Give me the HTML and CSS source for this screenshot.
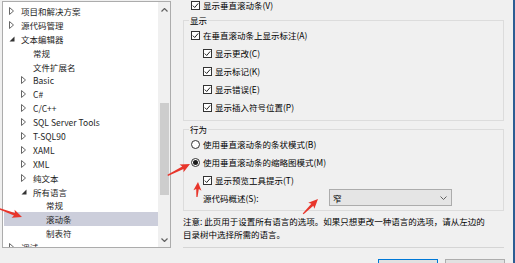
FILE: index.html
```html
<!DOCTYPE html>
<html lang="zh-CN">
<head>
    <meta charset="UTF-8">
    <meta name="viewport" content="width=device-width, initial-scale=1.0">
    <title>选项 - 滚动条</title>
    <link rel="stylesheet" href="styles.css">
</head>
<body>
    <div class="window">
        <div class="tree">
            <ul class="tree-list">
                <li class="node lv0"><span class="tw"><svg width="5" height="8" viewBox="0 0 5 8"><path d="M0.5 0.5 L4.5 4 L0.5 7.5 Z" fill="none" stroke="#666"/></svg></span>项目和解决方案</li>
                <li class="node lv0"><span class="tw"><svg width="5" height="8" viewBox="0 0 5 8"><path d="M0.5 0.5 L4.5 4 L0.5 7.5 Z" fill="none" stroke="#666"/></svg></span>源代码管理</li>
                <li class="node lv0"><span class="tw"><svg width="6" height="6" viewBox="0 0 6 6"><path d="M5.5 0.5 V5.5 H0.5 Z" fill="#333"/></svg></span>文本编辑器</li>
                <li class="node lv1"><span class="tw"></span>常规</li>
                <li class="node lv1"><span class="tw"></span>文件扩展名</li>
                <li class="node lv1"><span class="tw"><svg width="5" height="8" viewBox="0 0 5 8"><path d="M0.5 0.5 L4.5 4 L0.5 7.5 Z" fill="none" stroke="#666"/></svg></span>Basic</li>
                <li class="node lv1"><span class="tw"><svg width="5" height="8" viewBox="0 0 5 8"><path d="M0.5 0.5 L4.5 4 L0.5 7.5 Z" fill="none" stroke="#666"/></svg></span>C#</li>
                <li class="node lv1"><span class="tw"><svg width="5" height="8" viewBox="0 0 5 8"><path d="M0.5 0.5 L4.5 4 L0.5 7.5 Z" fill="none" stroke="#666"/></svg></span>C/C++</li>
                <li class="node lv1"><span class="tw"><svg width="5" height="8" viewBox="0 0 5 8"><path d="M0.5 0.5 L4.5 4 L0.5 7.5 Z" fill="none" stroke="#666"/></svg></span>SQL Server Tools</li>
                <li class="node lv1"><span class="tw"><svg width="5" height="8" viewBox="0 0 5 8"><path d="M0.5 0.5 L4.5 4 L0.5 7.5 Z" fill="none" stroke="#666"/></svg></span>T-SQL90</li>
                <li class="node lv1"><span class="tw"><svg width="5" height="8" viewBox="0 0 5 8"><path d="M0.5 0.5 L4.5 4 L0.5 7.5 Z" fill="none" stroke="#666"/></svg></span>XAML</li>
                <li class="node lv1"><span class="tw"><svg width="5" height="8" viewBox="0 0 5 8"><path d="M0.5 0.5 L4.5 4 L0.5 7.5 Z" fill="none" stroke="#666"/></svg></span>XML</li>
                <li class="node lv1"><span class="tw"><svg width="5" height="8" viewBox="0 0 5 8"><path d="M0.5 0.5 L4.5 4 L0.5 7.5 Z" fill="none" stroke="#666"/></svg></span>纯文本</li>
                <li class="node lv1"><span class="tw"><svg width="6" height="6" viewBox="0 0 6 6"><path d="M5.5 0.5 V5.5 H0.5 Z" fill="#333"/></svg></span>所有语言</li>
                <li class="node lv2"><span class="tw"></span>常规</li>
                <li class="node lv2 sel"><span class="tw"></span>滚动条</li>
                <li class="node lv2"><span class="tw"></span>制表符</li>
                <li class="node lv0"><span class="tw"><svg width="5" height="8" viewBox="0 0 5 8"><path d="M0.5 0.5 L4.5 4 L0.5 7.5 Z" fill="none" stroke="#666"/></svg></span>调试</li>
            </ul>
            <div class="vscroll">
                <span class="sb-arrow"><svg width="7" height="4" viewBox="0 0 7 4"><path d="M0.5 3.5 L3.5 0.5 L6.5 3.5" fill="none" stroke="#606060" stroke-width="1.2"/></svg></span>
                <div class="sb-track"><div class="sb-thumb"></div></div>
                <span class="sb-arrow"><svg width="7" height="4" viewBox="0 0 7 4"><path d="M0.5 0.5 L3.5 3.5 L6.5 0.5" fill="none" stroke="#606060" stroke-width="1.2"/></svg></span>
            </div>
        </div>

        <div class="pane">
            <div class="opt top-opt"><span class="cb"><svg width="7" height="7" viewBox="0 0 7 7"><path d="M0.8 3.6 L2.7 5.5 L6.2 1.4" fill="none" stroke="#222"/></svg></span>显示垂直滚动条(V)</div>

            <fieldset class="group">
                <legend>显示</legend>
                <div class="opt"><span class="cb"><svg width="7" height="7" viewBox="0 0 7 7"><path d="M0.8 3.6 L2.7 5.5 L6.2 1.4" fill="none" stroke="#222"/></svg></span>在垂直滚动条上显示标注(A)</div>
                <div class="opt sub"><span class="cb"><svg width="7" height="7" viewBox="0 0 7 7"><path d="M0.8 3.6 L2.7 5.5 L6.2 1.4" fill="none" stroke="#222"/></svg></span>显示更改(C)</div>
                <div class="opt sub"><span class="cb"><svg width="7" height="7" viewBox="0 0 7 7"><path d="M0.8 3.6 L2.7 5.5 L6.2 1.4" fill="none" stroke="#222"/></svg></span>显示标记(K)</div>
                <div class="opt sub"><span class="cb"><svg width="7" height="7" viewBox="0 0 7 7"><path d="M0.8 3.6 L2.7 5.5 L6.2 1.4" fill="none" stroke="#222"/></svg></span>显示错误(E)</div>
                <div class="opt sub"><span class="cb"><svg width="7" height="7" viewBox="0 0 7 7"><path d="M0.8 3.6 L2.7 5.5 L6.2 1.4" fill="none" stroke="#222"/></svg></span>显示插入符号位置(P)</div>
            </fieldset>

            <fieldset class="group behaviour">
                <legend>行为</legend>
                <div class="opt"><span class="rb"></span>使用垂直滚动条的条状模式(B)</div>
                <div class="opt"><span class="rb on"></span>使用垂直滚动条的缩略图模式(M)</div>
                <div class="opt sub"><span class="cb"><svg width="7" height="7" viewBox="0 0 7 7"><path d="M0.8 3.6 L2.7 5.5 L6.2 1.4" fill="none" stroke="#222"/></svg></span>显示预览工具提示(T)</div>
                <div class="opt sub combo-row">
                    <span class="combo-label">源代码概述(S):</span>
                    <div class="combo">窄<svg width="7" height="4" viewBox="0 0 7 4"><path d="M0.5 0.5 L3.5 3.5 L6.5 0.5" fill="none" stroke="#606060"/></svg></div>
                </div>
            </fieldset>

            <p class="note">注意: 此页用于设置所有语言的选项。如果只想更改一种语言的选项，请从左边的<br>目录树中选择所需的语言。</p>

            <div class="sep"></div>

            <div class="buttons">
                <button class="btn primary">确定</button>
                <button class="btn">取消</button>
            </div>
        </div>
    </div>

    <!-- red annotation arrows drawn over the screenshot -->
    <svg class="marks" width="515" height="263" viewBox="0 0 515 263">
        <g fill="#e8352b">
            <polygon transform="translate(22 217) rotate(20)" points="-25,-0.6 -8,-1.4 -9.5,-4.3 0,0 -9.5,4.3 -8,1.4 -25,0.6"/>
            <polygon transform="translate(190 164) rotate(-27)" points="-25,-0.6 -8,-1.4 -9.5,-4.3 0,0 -9.5,4.3 -8,1.4 -25,0.6"/>
            <polygon transform="translate(198 182) rotate(-86)" points="-15,-0.6 -7,-1.3 -8.5,-4 0,0 -8.5,4 -7,1.3 -15,0.6"/>
            <polygon transform="translate(318 199) rotate(-45)" points="-21,-0.6 -8,-1.4 -9.5,-4.3 0,0 -9.5,4.3 -8,1.4 -21,0.6"/>
        </g>
    </svg>
</body>
</html>
```

FILE: styles.css
```css
body {
    margin: 0;
    background-color: #f0f0f0;
    font-family: "Noto Sans CJK SC", "Noto Sans", sans-serif;
    font-size: 8.5px;
    color: #000;
    overflow: hidden;
}
.window {
    display: flex;
    align-items: flex-start;
    width: 513px;
    height: 263px;
    overflow: hidden;
    border-right: 2px solid #2c5d93;
}

/* tree on the left */
.tree {
    display: flex;
    flex: none;
    width: 169px;
    height: 247px;
    margin: 1px 0 0 2px;
    box-sizing: border-box;
    border: 1px solid #acacac;
    background: #fff;
}
.tree-list {
    flex: 1;
    list-style: none;
    margin: 0;
    padding: 2px 0 0 1px;
    overflow: hidden;
}
.node {
    display: flex;
    align-items: center;
    height: 13.9px;
    white-space: nowrap;
    color: #1e1e1e;
}
.lv0 {
    padding-left: 4px;
}
.lv1 {
    padding-left: 16px;
}
.lv2 {
    padding-left: 29px;
}
.node.sel {
    background: #cccedb;
}
.tw {
    display: flex;
    align-items: center;
    flex: none;
    width: 13px;
    padding-left: 1px;
    box-sizing: border-box;
}
.vscroll {
    display: flex;
    flex-direction: column;
    align-items: center;
    width: 12px;
    background: #f0f0f0;
}
.sb-arrow {
    display: flex;
    align-items: center;
    justify-content: center;
    height: 15px;
}
.sb-track {
    flex: 1;
}
.sb-thumb {
    width: 9px;
    height: 92px;
    margin-top: 86px;
    background: #cdcdcd;
}

/* options pane */
.pane {
    flex: 1;
    padding: 0 9px 0 12px;
}
.opt {
    display: flex;
    align-items: center;
    height: 18px;
    white-space: nowrap;
}
.top-opt {
    margin-top: -4px;
    padding-left: 8px;
}
.sub {
    padding-left: 12px;
}
.group {
    margin: 0;
    padding: 0 8px 4px 7px;
    border: 1px solid #dcdcdc;
    min-width: 0;
}
.group legend {
    height: 12px;
    line-height: 12px;
    padding: 0 1px;
    margin-left: -2px;
}
.behaviour {
    margin-top: 2px;
}
.cb {
    display: flex;
    align-items: center;
    justify-content: center;
    flex: none;
    width: 9px;
    height: 9px;
    margin-right: 3px;
    box-sizing: border-box;
    border: 1px solid #333;
    background: #fff;
}
.rb {
    display: flex;
    align-items: center;
    justify-content: center;
    flex: none;
    width: 9px;
    height: 9px;
    margin-right: 3px;
    box-sizing: border-box;
    border: 1px solid #333;
    border-radius: 50%;
    background: #fff;
}
.rb.on::after {
    content: "";
    width: 5px;
    height: 5px;
    border-radius: 50%;
    background: #1a1a1a;
}
.combo-row {
    height: 17px;
}
.combo-label {
    width: 126px;
    flex: none;
}
.combo {
    display: flex;
    align-items: center;
    justify-content: space-between;
    width: 123px;
    height: 17px;
    padding: 0 4px 0 3px;
    box-sizing: border-box;
    border: 1px solid #acacac;
    background: #e5e5e5;
}
.note {
    margin: 4px 0 0;
    line-height: 13px;
    white-space: nowrap;
}
.sep {
    height: 1px;
    margin-top: 6px;
    background: #d5d5d5;
}
.buttons {
    display: flex;
    justify-content: flex-end;
    gap: 7px;
    margin: 11px -1px 0 0;
}
.btn {
    width: 60px;
    height: 21px;
    font: inherit;
    border: 1px solid #adadad;
    background: #e1e1e1;
}
.btn.primary {
    border-color: #0078d7;
}

.marks {
    position: absolute;
    left: 0;
    top: 0;
    pointer-events: none;
}
```
